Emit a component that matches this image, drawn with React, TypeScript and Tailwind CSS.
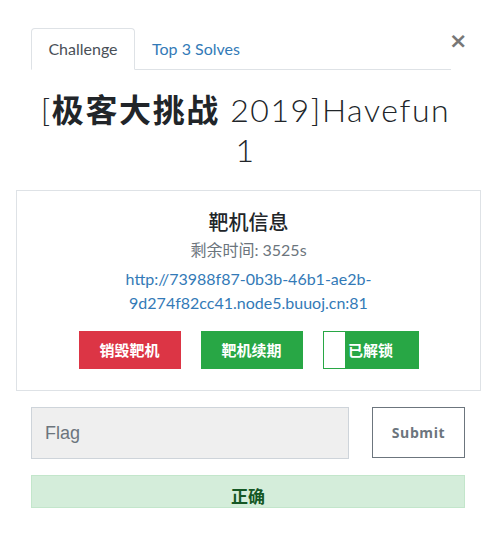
import React from "react";

export default function App() {
  return (
    <div className="w-[491px] h-[541px] bg-white relative overflow-hidden font-['Lato','Noto_Sans_CJK_SC',sans-serif]">
      {/* Tabs */}
      <div className="pt-[28px] pl-[31px]">
        <div className="w-[420px] flex border-b border-[#dee2e6] h-[42px]">
          <div className="w-[104px] h-[42px] -mb-px border border-[#dee2e6] border-b-white rounded-t-[4px] bg-white flex items-center justify-center text-[16px] text-[#495057]">
            Challenge
          </div>
          <div className="ml-[17px] h-[41px] flex items-center text-[16px] text-[#337ab7]">
            Top 3 Solves
          </div>
        </div>
      </div>
      <button className="absolute left-[449px] top-[31px] text-[22px] leading-[20px] font-bold text-[#777] font-['DejaVu_Sans',sans-serif]">
        ×
      </button>

      {/* Title */}
      <div className="mt-[18px] text-center text-[32px] leading-[40px] text-[#212529] tracking-[1.6px] font-light">
        [<span className="font-bold font-['Noto_Sans_CJK_SC',sans-serif]">极客大挑战</span> 2019]Havefun
        <br />1
      </div>

      {/* Card */}
      <div className="mt-[20px] ml-[16px] w-[465px] h-[201px] border border-[#dee2e6] flex flex-col items-center pt-[16px]">
        <div className="text-[20px] leading-[30px] font-medium text-[#212529] font-['Noto_Sans_CJK_SC',sans-serif]">
          靶机信息
        </div>
        <div className="mt-[1px] text-[16px] leading-[24px] text-[#6c757d]">
          剩余时间: 3525s
        </div>
        <div className="mt-[5px] text-[16px] leading-[24px] text-[#337ab7] text-center">
          http://73988f87-0b3b-46b1-ae2b-
          <br />
          9d274f82cc41.node5.buuoj.cn:81
        </div>
        <div className="mt-[16px] flex gap-[20px] font-['Noto_Sans_CJK_SC',sans-serif] text-[15px] font-bold text-white">
          <div className="w-[102px] h-[38px] bg-[#dc3545] flex items-center justify-center">
            销毁靶机
          </div>
          <div className="w-[102px] h-[38px] bg-[#28a745] flex items-center justify-center">
            靶机续期
          </div>
          <div className="relative w-[96px] h-[38px] bg-[#28a745] border border-[#28a745] flex items-center justify-center">
            <div className="absolute left-0 top-0 w-[21px] h-full bg-white" />
            已解锁
          </div>
        </div>
      </div>

      {/* Flag form */}
      <div className="mt-[16px] pl-[31px] flex">
        <div className="w-[318px] h-[52px] bg-[#efefef] border border-[#ced4da] flex items-center pl-[13px] text-[18px] text-[#6c757d] font-['Liberation_Sans',Arial,sans-serif]">
          Flag
        </div>
        <div className="ml-[23px] w-[93px] h-[51px] border border-[#6c757d] flex items-center justify-center text-[14px] font-bold text-[#6c757d] tracking-[0.6px] font-['Open_Sans',sans-serif]">
          Submit
        </div>
      </div>

      {/* Alert */}
      <div className="mt-[16px] ml-[31px] w-[434px] h-[33px] bg-[#d4edda] border border-[#c3e6cb] flex justify-center pt-[7px] text-[17px] font-bold text-[#155724] leading-[26px] font-['Noto_Sans_CJK_SC',sans-serif]">
        正确
      </div>
    </div>
  );
}
